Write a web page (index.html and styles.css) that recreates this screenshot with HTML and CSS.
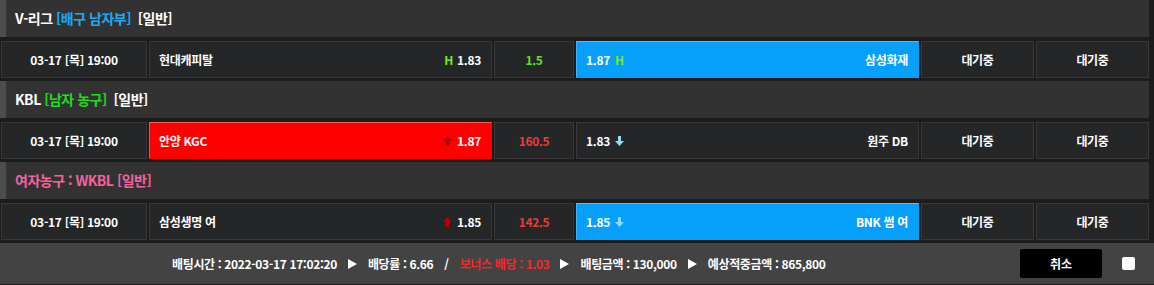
FILE: index.html
```html
<!DOCTYPE html>
<html lang="ko">
<head>
    <meta charset="UTF-8">
    <title>베팅 슬립</title>
    <link rel="stylesheet" href="styles.css">
</head>
<body>
    <div class="slip">
        <!-- V-리그 -->
        <div class="league">
            <div class="league-head">V-리그 <span class="c-blue">[배구 남자부]</span>&nbsp; [일반]</div>
            <div class="match-row">
                <div class="cell date">03-17 [목] 19:00</div>
                <div class="cell team">
                    <span>현대캐피탈</span>
                    <span class="odds"><span class="mark-h">H</span>1.83</span>
                </div>
                <div class="cell line c-green">1.5</div>
                <div class="cell team picked-blue">
                    <span class="odds">1.87<span class="mark-h after">H</span></span>
                    <span>삼성화재</span>
                </div>
                <div class="cell status">대기중</div>
                <div class="cell status">대기중</div>
            </div>
        </div>

        <!-- KBL -->
        <div class="league">
            <div class="league-head">KBL <span class="c-green2">[남자 농구]</span>&nbsp; [일반]</div>
            <div class="match-row">
                <div class="cell date">03-17 [목] 19:00</div>
                <div class="cell team picked-red">
                    <span>안양 KGC</span>
                    <span class="odds">
                        <svg class="arrow up dim" viewBox="0 0 9 10"><polygon points="4.5,0 9,5 6,5 6,10 3,10 3,5 0,5"/></svg>1.87
                    </span>
                </div>
                <div class="cell line c-red">160.5</div>
                <div class="cell team">
                    <span class="odds">1.83<svg class="arrow down after" viewBox="0 0 9 10"><polygon points="3,0 6,0 6,5 9,5 4.5,10 0,5 3,5"/></svg></span>
                    <span>원주 DB</span>
                </div>
                <div class="cell status">대기중</div>
                <div class="cell status">대기중</div>
            </div>
        </div>

        <!-- WKBL -->
        <div class="league">
            <div class="league-head c-pink">여자농구 : WKBL [일반]</div>
            <div class="match-row">
                <div class="cell date">03-17 [목] 19:00</div>
                <div class="cell team">
                    <span>삼성생명 여</span>
                    <span class="odds">
                        <svg class="arrow up" viewBox="0 0 9 10"><polygon points="4.5,0 9,5 6,5 6,10 3,10 3,5 0,5"/></svg>1.85
                    </span>
                </div>
                <div class="cell line c-red">142.5</div>
                <div class="cell team picked-blue">
                    <span class="odds">1.85<svg class="arrow down after" viewBox="0 0 9 10"><polygon points="3,0 6,0 6,5 9,5 4.5,10 0,5 3,5"/></svg></span>
                    <span>BNK 썸 여</span>
                </div>
                <div class="cell status">대기중</div>
                <div class="cell status">대기중</div>
            </div>
        </div>
    </div>

    <!-- 하단 요약 -->
    <div class="summary">
        <div class="summary-info">
            <span>배팅시간 : 2022-03-17 17:02:20</span>
            <i class="tri"></i>
            <span>배당률 : 6.66</span>
            <span>/</span>
            <span class="c-bonus">보너스 배당 : 1.03</span>
            <i class="tri"></i>
            <span>배팅금액 : 130,000</span>
            <i class="tri"></i>
            <span>예상적중금액 : 865,800</span>
        </div>
        <button class="btn-cancel">취소</button>
        <input type="checkbox" class="check">
    </div>
</body>
</html>
```

FILE: styles.css
```css
body {
    margin: 0;
    background-color: #1c1c1c;
    font-family: "Noto Sans CJK KR", "Noto Sans", sans-serif;
    color: #fff;
    width: 1154px;
    height: 285px;
    overflow: hidden;
}

.slip {
    width: 1149px;
}

.league {
    padding-bottom: 3px;
}

.league-head {
    height: 37px;
    line-height: 36px;
    background-color: #323232;
    border-left: 6px solid #4c4c4c;
    padding-left: 9px;
    font-size: 14px;
    font-weight: bold;
    margin-bottom: 4px;
    letter-spacing: -0.5px;
}

.match-row {
    display: grid;
    grid-template-columns: 146px 343px 80px 343px 113px 113px;
    gap: 2px;
    padding-left: 1px;
    height: 37px;
}

.cell {
    background-color: #252628;
    border: 1px solid #383838;
    display: flex;
    align-items: center;
    font-size: 12px;
    font-weight: bold;
    letter-spacing: -0.3px;
}

.date,
.line,
.status {
    justify-content: center;
}

.team {
    justify-content: space-between;
    padding: 0 10px 0 9px;
}

.odds {
    display: flex;
    align-items: center;
}

.mark-h {
    color: #72f01c;
    margin-right: 4px;
}

.mark-h.after {
    margin: 0 0 0 5px;
}

.arrow {
    width: 9px;
    height: 10px;
    margin-right: 5px;
}

.arrow.after {
    margin: 0 0 0 5px;
}

.arrow.up polygon {
    fill: #c00000;
}

.arrow.up.dim polygon {
    fill: #a00000;
}

.arrow.down polygon {
    fill: #8fdcf8;
}

.picked-blue {
    background-color: #069ffc;
    border-color: #069ffc;
    border-top-color: #55c0ff;
    border-left-color: #40b4ff;
}

.picked-red {
    background-color: #ff0000;
    border-color: #ff0000;
    border-top-color: #ff5a5a;
    border-left-color: #ff4a4a;
}

.c-blue {
    color: #1ea9f5;
}

.c-green {
    color: #62e01a;
}

.c-green2 {
    color: #1edc1e;
}

.c-red {
    color: #ea3c3c;
}

.c-pink {
    color: #f4619f;
}

.c-bonus {
    color: #ff2424;
}

.summary {
    height: 41px;
    background-color: #434343;
    display: flex;
    align-items: center;
}

.summary-info {
    padding-left: 172px;
    width: 848px;
    display: flex;
    align-items: center;
    gap: 11px;
    font-size: 12px;
    font-weight: bold;
    letter-spacing: -0.35px;
}

.tri {
    width: 0;
    height: 0;
    border-left: 9px solid #fff;
    border-top: 5px solid transparent;
    border-bottom: 5px solid transparent;
}

.btn-cancel {
    width: 82px;
    height: 29px;
    background-color: #000;
    color: #fff;
    border: none;
    border-radius: 2px;
    font-family: inherit;
    font-size: 12px;
    font-weight: bold;
    padding: 0;
}

.check {
    appearance: none;
    width: 13px;
    height: 13px;
    background-color: #fff;
    border-radius: 2px;
    margin: 0 0 0 20px;
}
```
